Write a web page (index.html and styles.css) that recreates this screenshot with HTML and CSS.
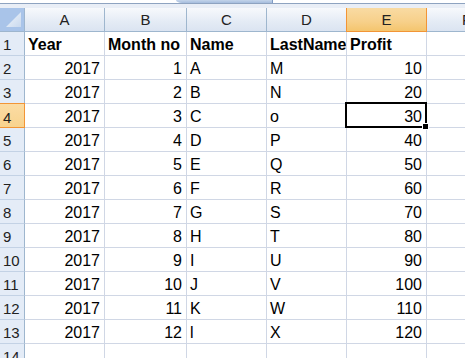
FILE: index.html
```html
<!DOCTYPE html>
<html>
    <head>
        <meta charset="UTF-8">
        <title>Sheet1</title>
        <link rel="stylesheet" href="styles.css">
    </head>
    <body>
        <div class="top-strip">
            <div class="split-tab"></div>
        </div>
        <div class="sheet">
            <div class="corner"></div>
            <div class="col-head">A</div>
            <div class="col-head">B</div>
            <div class="col-head">C</div>
            <div class="col-head">D</div>
            <div class="col-head active">E</div>
            <div class="col-head">F</div>

            <div class="row-head">1</div>
            <div class="cell bold">Year</div>
            <div class="cell bold">Month no</div>
            <div class="cell bold">Name</div>
            <div class="cell bold">LastName</div>
            <div class="cell bold">Profit</div>
            <div class="cell"></div>

            <div class="row-head">2</div>
            <div class="cell num">2017</div><div class="cell num">1</div><div class="cell">A</div><div class="cell">M</div><div class="cell num">10</div><div class="cell"></div>
            <div class="row-head">3</div>
            <div class="cell num">2017</div><div class="cell num">2</div><div class="cell">B</div><div class="cell">N</div><div class="cell num">20</div><div class="cell"></div>
            <div class="row-head active">4</div>
            <div class="cell num">2017</div><div class="cell num">3</div><div class="cell">C</div><div class="cell">o</div><div class="cell num selected">30</div><div class="cell"></div>
            <div class="row-head">5</div>
            <div class="cell num">2017</div><div class="cell num">4</div><div class="cell">D</div><div class="cell">P</div><div class="cell num">40</div><div class="cell"></div>
            <div class="row-head">6</div>
            <div class="cell num">2017</div><div class="cell num">5</div><div class="cell">E</div><div class="cell">Q</div><div class="cell num">50</div><div class="cell"></div>
            <div class="row-head">7</div>
            <div class="cell num">2017</div><div class="cell num">6</div><div class="cell">F</div><div class="cell">R</div><div class="cell num">60</div><div class="cell"></div>
            <div class="row-head">8</div>
            <div class="cell num">2017</div><div class="cell num">7</div><div class="cell">G</div><div class="cell">S</div><div class="cell num">70</div><div class="cell"></div>
            <div class="row-head">9</div>
            <div class="cell num">2017</div><div class="cell num">8</div><div class="cell">H</div><div class="cell">T</div><div class="cell num">80</div><div class="cell"></div>
            <div class="row-head">10</div>
            <div class="cell num">2017</div><div class="cell num">9</div><div class="cell">I</div><div class="cell">U</div><div class="cell num">90</div><div class="cell"></div>
            <div class="row-head">11</div>
            <div class="cell num">2017</div><div class="cell num">10</div><div class="cell">J</div><div class="cell">V</div><div class="cell num">100</div><div class="cell"></div>
            <div class="row-head">12</div>
            <div class="cell num">2017</div><div class="cell num">11</div><div class="cell">K</div><div class="cell">W</div><div class="cell num">110</div><div class="cell"></div>
            <div class="row-head">13</div>
            <div class="cell num">2017</div><div class="cell num">12</div><div class="cell">l</div><div class="cell">X</div><div class="cell num">120</div><div class="cell"></div>
            <div class="row-head">14</div>
            <div class="cell"></div><div class="cell"></div><div class="cell"></div><div class="cell"></div><div class="cell"></div><div class="cell"></div>
        </div>
    </body>
</html>
```

FILE: styles.css
```css
body {
    margin: 0;
    background-color: white;
    font-family: "Liberation Sans", Arial, sans-serif;
    font-size: 16px;
    color: black;
    overflow: hidden;
}
.top-strip {
    height: 8px;
    box-sizing: border-box;
    border-top: 3px solid white;
    border-bottom: 4px solid #e9eef6;
    background-color: #8ea3c0;
    display: flex;
}
.split-tab {
    margin-left: 176px;
    margin-top: -3px;
    width: 97px;
    height: 3px;
    box-sizing: border-box;
    background: linear-gradient(#c3d4ea, #a6bddd);
    border-right: 1px solid #7f9bc4;
    border-bottom-left-radius: 6px 3px;
}
.sheet {
    display: grid;
    grid-template-columns: 25px 80px 82px 80px 80px 80px 80px;
    grid-auto-rows: 24px;
    width: 507px;
}
.corner {
    position: relative;
    background-color: #a9c4e9;
    border-right: 1px solid #9eb6ce;
    border-bottom: 1px solid #9eb6ce;
}
.corner::after {
    content: "";
    position: absolute;
    left: 6px;
    top: 4px;
    width: 15px;
    height: 15px;
    background: linear-gradient(135deg, #f2f6fb, #c9d9ee);
    clip-path: polygon(100% 0, 100% 100%, 0 100%);
}
.col-head {
    box-sizing: border-box;
    background: linear-gradient(#f7f9fc, #e4ebf5 60%, #dbe4f1);
    border-right: 1px solid #9eb6ce;
    border-bottom: 1px solid #9eb6ce;
    text-align: center;
    font-size: 15px;
    line-height: 18px;
    padding-top: 3px;
    color: #222;
}
.col-head.active {
    background: linear-gradient(#f9dba3, #f7d08a 60%, #f4c56e);
    border-left: 1px solid #f29536;
    border-right: 1px solid #f29536;
    border-bottom: 1px solid #f29536;
    margin-left: -1px;
}
.row-head {
    box-sizing: border-box;
    background-color: #e4ecf7;
    border-right: 1px solid #9eb6ce;
    border-bottom: 1px solid #c3d2e5;
    font-size: 15px;
    line-height: 18px;
    padding: 4px 0 1px 3px;
    color: #222;
}
.row-head.active {
    background: linear-gradient(#fbdca4, #f8d38e);
    border-top: 1px solid #f29536;
    border-right: 1px solid #f29536;
    border-bottom: 1px solid #f29536;
    margin-top: -1px;
    padding-top: 5px;
}
.cell {
    box-sizing: border-box;
    border-right: 1px solid #d0d7e5;
    border-bottom: 1px solid #d0d7e5;
    line-height: 18px;
    padding: 4px 2px 1px 3px;
    white-space: nowrap;
    overflow: hidden;
}
.bold {
    font-weight: bold;
}
.num {
    text-align: right;
    padding-right: 4px;
}
.selected {
    position: relative;
    overflow: visible;
}
.selected::before {
    content: "";
    position: absolute;
    left: -2px;
    top: -2px;
    right: -1px;
    bottom: -1px;
    border: 2px solid black;
    z-index: 2;
}
.selected::after {
    content: "";
    position: absolute;
    right: -3px;
    bottom: -3px;
    width: 5px;
    height: 5px;
    background-color: black;
    border: 1px solid white;
    z-index: 3;
}
```
